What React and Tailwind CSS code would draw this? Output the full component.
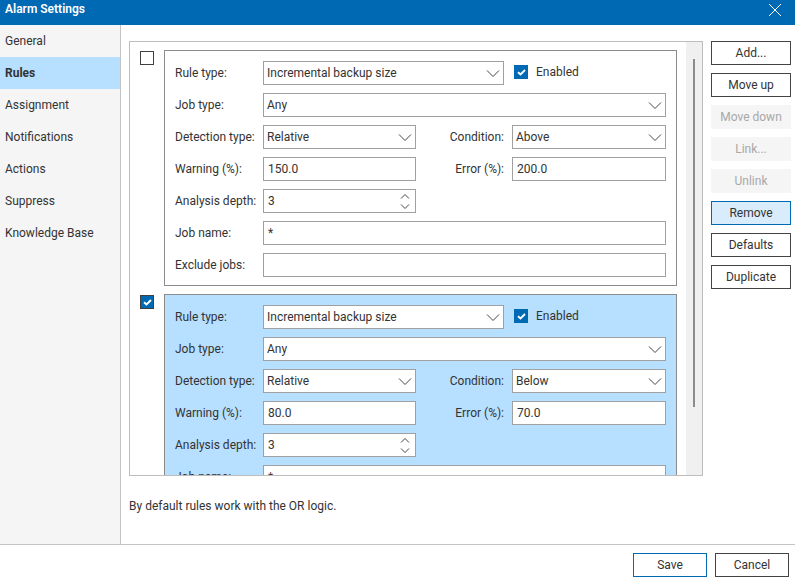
const Chevron = () => (
  <svg width="14" height="8" viewBox="0 0 14 8" fill="none" className="shrink-0">
    <polyline points="1,1.5 7,7.5 13,1.5" stroke="#444" strokeWidth="1" />
  </svg>
);

const Select = ({ value, className = "" }) => (
  <div className={`h-6 flex items-center justify-between border border-[#a0a0a0] bg-white pl-[3px] pr-[3px] ${className}`}>
    <span>{value}</span>
    <Chevron />
  </div>
);

const Input = ({ value, className = "" }) => (
  <div className={`h-6 flex items-center border border-[#a0a0a0] bg-white px-1 ${className}`}>
    <span>{value}</span>
  </div>
);

const Check = ({ checked, border }) => (
  <div className={`w-[14px] h-[14px] shrink-0 flex items-center justify-center border ${border ? "border-[#404040]" : "border-[#0069b4]"} ${checked ? "bg-[#0069b4]" : "bg-white"}`}>
    {checked && (
      <svg width="10" height="8" viewBox="0 0 10 8" fill="none">
        <polyline points="2,4.2 4.5,6.5 9,2" stroke="#fff" strokeWidth="1.9" />
      </svg>
    )}
  </div>
);

const Label = ({ children }) => <div className="w-[88px] shrink-0">{children}</div>;

const Row = ({ children }) => <div className="flex items-center h-6">{children}</div>;

const Card = ({ condition, warning, error, selected }) => (
  <div className={`w-[513px] border border-[#8c8c8c] pl-[10px] pr-[10px] pt-[10px] pb-2 flex flex-col gap-2 shrink-0 ${selected ? "bg-[#b7dfff]" : "bg-white"}`}>
    <Row>
      <Label>Rule type:</Label>
      <Select value="Incremental backup size" className="w-[241px]" />
      <div className="ml-[10px] flex items-center gap-2 -mt-[2px]">
        <Check checked />
        <span>Enabled</span>
      </div>
    </Row>
    <Row>
      <Label>Job type:</Label>
      <Select value="Any" className="w-[403px]" />
    </Row>
    <Row>
      <Label>Detection type:</Label>
      <Select value="Relative" className="w-[153px]" />
      <div className="w-[96px] pr-2 text-right shrink-0 whitespace-nowrap">Condition:</div>
      <Select value={condition} className="w-[154px]" />
    </Row>
    <Row>
      <Label>Warning (%):</Label>
      <Input value={warning} className="w-[153px]" />
      <div className="w-[96px] pr-2 text-right shrink-0 whitespace-nowrap">Error (%):</div>
      <Input value={error} className="w-[154px]" />
    </Row>
    <Row>
      <Label>Analysis depth:</Label>
      <div className="w-[153px] h-6 flex items-center justify-between border border-[#a0a0a0] bg-white pl-1 pr-[5px]">
        <span>3</span>
        <div className="flex flex-col gap-[5px]">
          <svg width="10" height="5" viewBox="0 0 10 5" fill="none">
            <polyline points="1,4.5 5,0.5 9,4.5" stroke="#444" strokeWidth="1" />
          </svg>
          <svg width="10" height="5" viewBox="0 0 10 5" fill="none">
            <polyline points="1,0.5 5,4.5 9,0.5" stroke="#444" strokeWidth="1" />
          </svg>
        </div>
      </div>
    </Row>
    <Row>
      <Label>Job name:</Label>
      <Input value="*" className="w-[403px]" />
    </Row>
    <Row>
      <Label>Exclude jobs:</Label>
      <Input value="" className="w-[403px]" />
    </Row>
  </div>
);

const SideButton = ({ children, variant = "normal" }) => {
  const styles = {
    normal: "border-[#444444] bg-white text-[#333333]",
    disabled: "border-[#f5f5f5] bg-[#f5f5f5] text-[#a8a8a8]",
    active: "border-[#0069b4] bg-[#d9ecfb] text-[#333333]",
  };
  return (
    <div className={`w-20 h-6 border flex items-center justify-center ${styles[variant]}`}>{children}</div>
  );
};

const navItems = ["General", "Rules", "Assignment", "Notifications", "Actions", "Suppress", "Knowledge Base"];

export default function App() {
  return (
    <div className="w-[795px] h-[581px] overflow-hidden flex flex-col bg-white text-[#333333] text-[12px] font-['Roboto',sans-serif]">
      <div className="h-[25px] shrink-0 bg-[#0069b4] text-white flex items-start justify-between pl-[5px] pr-[13px]">
        <span className="font-semibold leading-[18px]">Alarm Settings</span>
        <svg width="14" height="14" viewBox="0 0 14 14" fill="none" className="mt-[3px]">
          <path d="M1 1 L13 13 M13 1 L1 13" stroke="#fff" strokeWidth="1" />
        </svg>
      </div>

      <div className="flex-1 flex min-h-0">
        <div className="w-[121px] shrink-0 bg-[#f5f5f5] border-r border-[#c4c4c4]">
          {navItems.map((item) => (
            <div key={item} className={`h-8 flex items-center pl-[5px] ${item === "Rules" ? "bg-[#b7dfff] font-bold" : ""}`}>
              {item}
            </div>
          ))}
        </div>

        <div className="flex-1 pl-2 pt-4 flex flex-col min-w-0">
          <div className="flex gap-2 items-start">
            <div className="w-[574px] h-[435px] border border-[#bdbdbd] flex overflow-hidden">
              <div className="flex-1 overflow-hidden pt-2 pl-[10px] flex flex-col gap-2">
                <div className="flex gap-[10px] items-start shrink-0">
                  <div className="mt-px"><Check border /></div>
                  <Card condition="Above" warning="150.0" error="200.0" />
                </div>
                <div className="flex gap-[10px] items-start shrink-0">
                  <div className="mt-px"><Check checked border /></div>
                  <Card condition="Below" warning="80.0" error="70.0" selected />
                </div>
              </div>
              <div className="w-4 shrink-0 bg-[#f0f0f0] pt-[17px] flex justify-center">
                <div className="w-[2px] h-[348px] bg-[#8c8c8c]" />
              </div>
            </div>
            <div className="flex flex-col gap-2">
              <SideButton>Add...</SideButton>
              <SideButton>Move up</SideButton>
              <SideButton variant="disabled">Move down</SideButton>
              <SideButton variant="disabled">Link...</SideButton>
              <SideButton variant="disabled">Unlink</SideButton>
              <SideButton variant="active">Remove</SideButton>
              <SideButton>Defaults</SideButton>
              <SideButton>Duplicate</SideButton>
            </div>
          </div>
          <div className="mt-[21px]">By default rules work with the OR logic.</div>
        </div>
      </div>

      <div className="h-[37px] shrink-0 border-t border-[#c4c4c4] flex justify-end items-start gap-2 pt-2 pr-[6px]">
        <div className="w-[74px] h-6 border border-[#0069b4] flex items-center justify-center">Save</div>
        <div className="w-[74px] h-6 border border-[#444444] flex items-center justify-center">Cancel</div>
      </div>
    </div>
  );
}
